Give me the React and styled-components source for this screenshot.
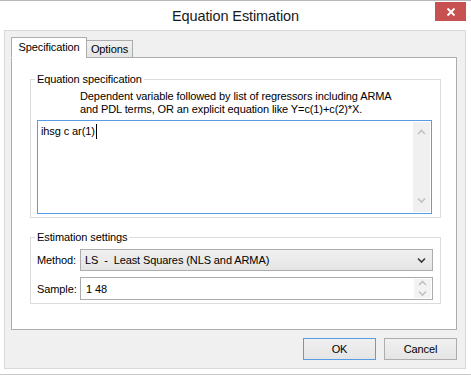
import React from 'react'
import styled, { createGlobalStyle } from 'styled-components'

const Global = createGlobalStyle`
    html, body {
        margin: 0;
        padding: 0;
        background: #ffffff;
    }
    body {
        font-family: "Liberation Sans", Arial, sans-serif;
        font-size: 11px;
        letter-spacing: -0.1px;
        color: #000000;
    }
`

function Chevron({ dir = 'down', color = '#c2c2c2' }) {
    const d = dir === 'up' ? 'M1 5 L4.5 1.5 L8 5' : 'M1 1.5 L4.5 5 L8 1.5'
    return (
        <svg width="9" height="7" viewBox="0 0 9 7">
            <path d={d} fill="none" stroke={color} strokeWidth="1.6" />
        </svg>
    )
}

function App() {
    return (
        <>
            <Global />
            <Window>
                <TitleBar>
                    <span />
                    <Title>Equation Estimation</Title>
                    <CloseBtn>
                        <svg width="10" height="10" viewBox="0 0 10 10">
                            <path d="M1.5 1.5 L8.5 8.5 M8.5 1.5 L1.5 8.5" stroke="#ffffff" strokeWidth="1.8" />
                        </svg>
                    </CloseBtn>
                </TitleBar>
                <Client>
                    <TabStrip>
                        <Tab active>Specification</Tab>
                        <Tab>Options</Tab>
                    </TabStrip>
                    <Panel>
                        <Group style={{ height: 146 }}>
                            <Legend>Equation specification</Legend>
                            <Hint>
                                Dependent variable followed by list of regressors including ARMA<br />
                                and PDL terms, OR an explicit equation like Y=c(1)+c(2)*X.
                            </Hint>
                            <EditBox>
                                <EditText>
                                    ihsg c ar(1)<Caret />
                                </EditText>
                                <ScrollTrack>
                                    <Chevron dir="up" />
                                    <Chevron dir="down" />
                                </ScrollTrack>
                            </EditBox>
                        </Group>
                        <Group style={{ height: 74 }}>
                            <Legend>Estimation settings</Legend>
                            <FieldRow>
                                <FieldLabel>Method:</FieldLabel>
                                <Select>
                                    <span>LS&nbsp;&nbsp;-&nbsp;&nbsp;Least Squares (NLS and ARMA)</span>
                                    <Chevron dir="down" color="#3a3a3a" />
                                </Select>
                            </FieldRow>
                            <FieldRow>
                                <FieldLabel>Sample:</FieldLabel>
                                <Input>
                                    <span>1 48</span>
                                    <Spin>
                                        <Chevron dir="up" />
                                        <Chevron dir="down" />
                                    </Spin>
                                </Input>
                            </FieldRow>
                        </Group>
                    </Panel>
                    <ButtonRow>
                        <Button primary>OK</Button>
                        <Button>Cancel</Button>
                    </ButtonRow>
                </Client>
                <BottomEdge />
            </Window>
        </>
    )
}

export default App

const Window = styled.div`
    width: 471px;
    height: 376px;
    box-sizing: border-box;
    border-top: 1px solid #b9b9b9;
    background: #ffffff;
    display: flex;
    flex-direction: column;
`
const TitleBar = styled.div`
    height: 29px;
    display: grid;
    grid-template-columns: 1fr auto 1fr;
    align-items: start;
`
const Title = styled.div`
    font-size: 14.5px;
    letter-spacing: -0.1px;
    color: #1a1a1a;
    padding-top: 7px;
`
const CloseBtn = styled.div`
    justify-self: end;
    margin: 1px 5px 0 0;
    width: 31px;
    height: 19px;
    background: #c75050;
    display: flex;
    align-items: center;
    justify-content: center;
`
const Client = styled.div`
    margin: 0 5px 0 4px;
    height: 339px;
    box-sizing: border-box;
    border: 1px solid #d9d9d9;
    background: #f0f0f0;
    padding: 7px 8px 0 6px;
    display: flex;
    flex-direction: column;
`
const TabStrip = styled.div`
    display: flex;
    align-items: flex-end;
    height: 20px;
    margin-bottom: -1px;
    position: relative;
    z-index: 1;
`
const Tab = styled.div`
    box-sizing: border-box;
    height: ${p => (p.active ? '21px' : '18px')};
    margin-left: ${p => (p.active ? '0' : '-1px')};
    display: flex;
    justify-content: center;
    align-items: ${p => (p.active ? 'flex-start' : 'center')};
    padding-top: ${p => (p.active ? '3px' : '0')};
    border: 1px solid #adadad;
    border-bottom: ${p => (p.active ? '1px solid #ffffff' : '1px solid #adadad')};
    background: ${p => (p.active ? '#ffffff' : 'linear-gradient(#f0f0f0, #e5e5e5)')};
    width: ${p => (p.active ? '76px' : '47px')};
`
const Panel = styled.div`
    height: 273px;
    box-sizing: border-box;
    border: 1px solid #adadad;
    background: #ffffff;
    padding: 14px 15px 0 18px;
    display: flex;
    flex-direction: column;
    gap: 12px;
`
const Group = styled.fieldset`
    margin: 0;
    box-sizing: border-box;
    border: 1px solid #dcdcdc;
    padding: 0 8px 0 6px;
    min-width: 0;
    display: flex;
    flex-direction: column;
`
const Legend = styled.legend`
    padding: 0 2px;
    margin-left: -2px;
    line-height: 15px;
`
const Hint = styled.div`
    padding-left: 43px;
    line-height: 13px;
    margin-top: 3px;
`
const EditBox = styled.div`
    margin-top: 4px;
    height: 94px;
    box-sizing: border-box;
    border: 1px solid #569de5;
    display: flex;
`
const EditText = styled.div`
    flex: 1;
    padding: 3px 3px;
    line-height: 15px;
`
const Caret = styled.span`
    display: inline-block;
    width: 0;
    margin-left: 1px;
    height: 15px;
    border-left: 1px solid #000000;
    vertical-align: top;
`
const ScrollTrack = styled.div`
    width: 17px;
    margin: 1px;
    background: #f0f0f0;
    display: flex;
    flex-direction: column;
    justify-content: space-between;
    align-items: center;
    padding: 7px 0 8px;
`
const FieldRow = styled.div`
    display: flex;
    align-items: center;
    margin-top: 6px;
    &:first-of-type { margin-top: 4px; }
`
const FieldLabel = styled.div`
    width: 43px;
    flex: none;
`
const Select = styled.div`
    flex: 1;
    height: 22px;
    box-sizing: border-box;
    border: 1px solid #acacac;
    background: linear-gradient(#f0f0f0, #e5e5e5);
    display: flex;
    align-items: center;
    justify-content: space-between;
    padding: 0 6px 0 4px;
    margin-right: -1px;
`
const Input = styled.div`
    flex: 1;
    height: 23px;
    box-sizing: border-box;
    border: 1px solid #acacac;
    background: #ffffff;
    display: flex;
    align-items: center;
    justify-content: space-between;
    padding: 0 1px 0 5px;
    margin-right: -1px;
`
const Spin = styled.div`
    width: 17px;
    height: 19px;
    background: #f3f3f3;
    display: flex;
    flex-direction: column;
    align-items: center;
    justify-content: space-around;
`
const ButtonRow = styled.div`
    display: flex;
    justify-content: flex-end;
    gap: 8px;
    margin-top: 8px;
`
const Button = styled.div`
    width: 73px;
    height: 22px;
    box-sizing: border-box;
    border: 1px solid ${p => (p.primary ? '#569de5' : '#adadad')};
    background: linear-gradient(#f0f0f0, #e5e5e5);
    display: flex;
    align-items: center;
    justify-content: center;
`
const BottomEdge = styled.div`
    margin-top: 5px;
    height: 1px;
    background: #c9c9c9;
`
